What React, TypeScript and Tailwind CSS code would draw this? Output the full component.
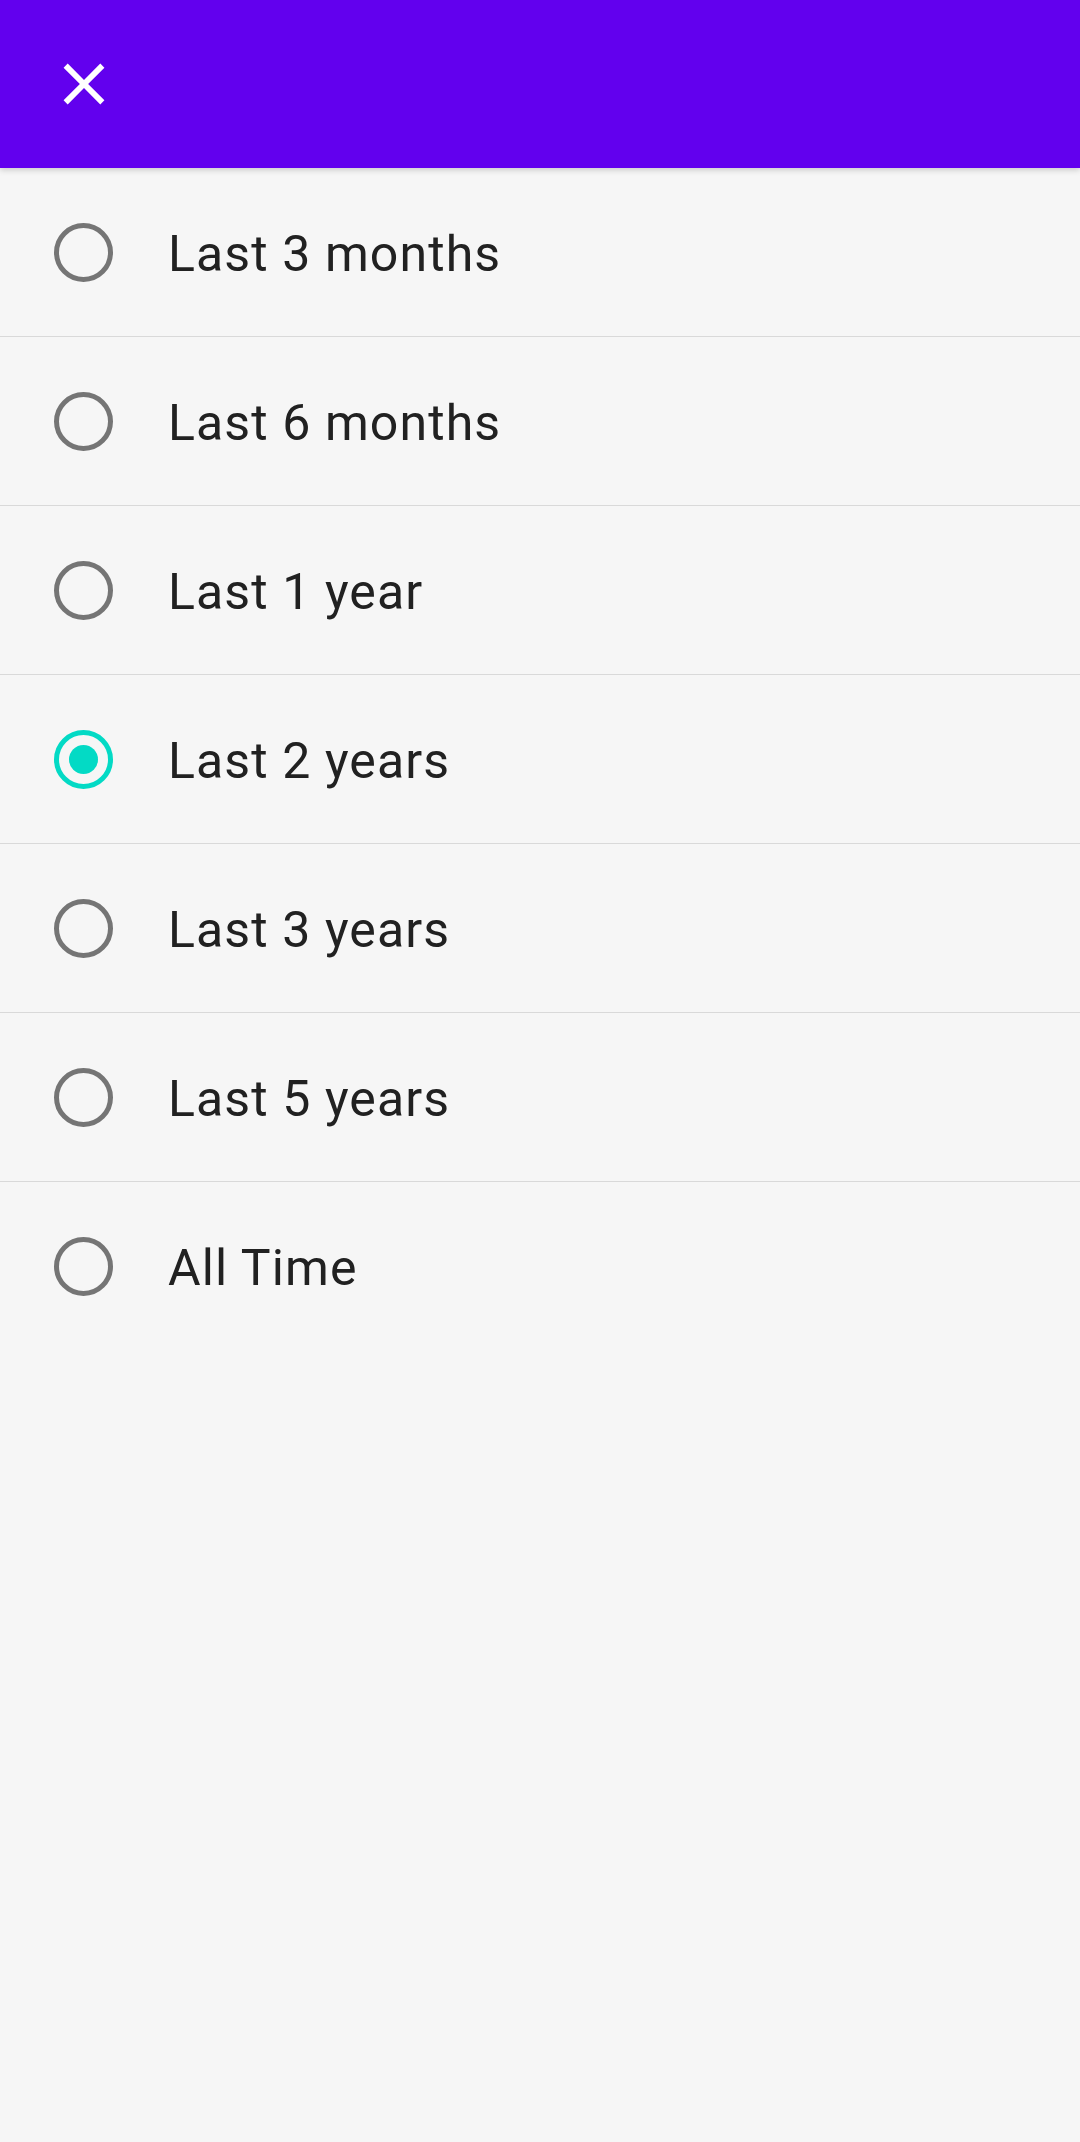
import React from "react";

const options = [
  "Last 3 months",
  "Last 6 months",
  "Last 1 year",
  "Last 2 years",
  "Last 3 years",
  "Last 5 years",
  "All Time",
];

const Radio = ({ checked }: { checked: boolean }) =>
  checked ? (
    <div className="w-[59px] h-[59px] shrink-0 rounded-full border-[5px] border-[#03dac5] flex items-center justify-center">
      <div className="w-[29px] h-[29px] rounded-full bg-[#03dac5]" />
    </div>
  ) : (
    <div className="w-[59px] h-[59px] shrink-0 rounded-full border-[5px] border-[#757575]" />
  );

export default function App() {
  const selected = 3;
  return (
    <div
      className="min-h-[2142px] w-[1080px] bg-[#f6f6f6]"
      style={{ fontFamily: "Roboto, 'Liberation Sans', sans-serif" }}
    >
      <header className="relative z-10 h-[168px] bg-[#6200ee] flex items-center pl-[49px] shadow-[0_2px_6px_rgba(0,0,0,0.18)]">
        <svg width="70" height="70" viewBox="0 0 24 24" className="text-white">
          <path
            d="M19 6.41 17.59 5 12 10.59 6.41 5 5 6.41 10.59 12 5 17.59 6.41 19 12 13.41 17.59 19 19 17.59 13.41 12z"
            fill="currentColor"
          />
        </svg>
      </header>
      <ul>
        {options.map((o, i) => (
          <li
            key={o}
            className={
              "h-[169px] flex items-center pl-[54px] " +
              (i < options.length - 1 ? "border-b border-[#d9d9d9]" : "")
            }
          >
            <Radio checked={i === selected} />
            <span className="ml-[55px] pt-[4px] text-[50px] tracking-[1.1px] text-[#212121]">
              {o}
            </span>
          </li>
        ))}
      </ul>
    </div>
  );
}
